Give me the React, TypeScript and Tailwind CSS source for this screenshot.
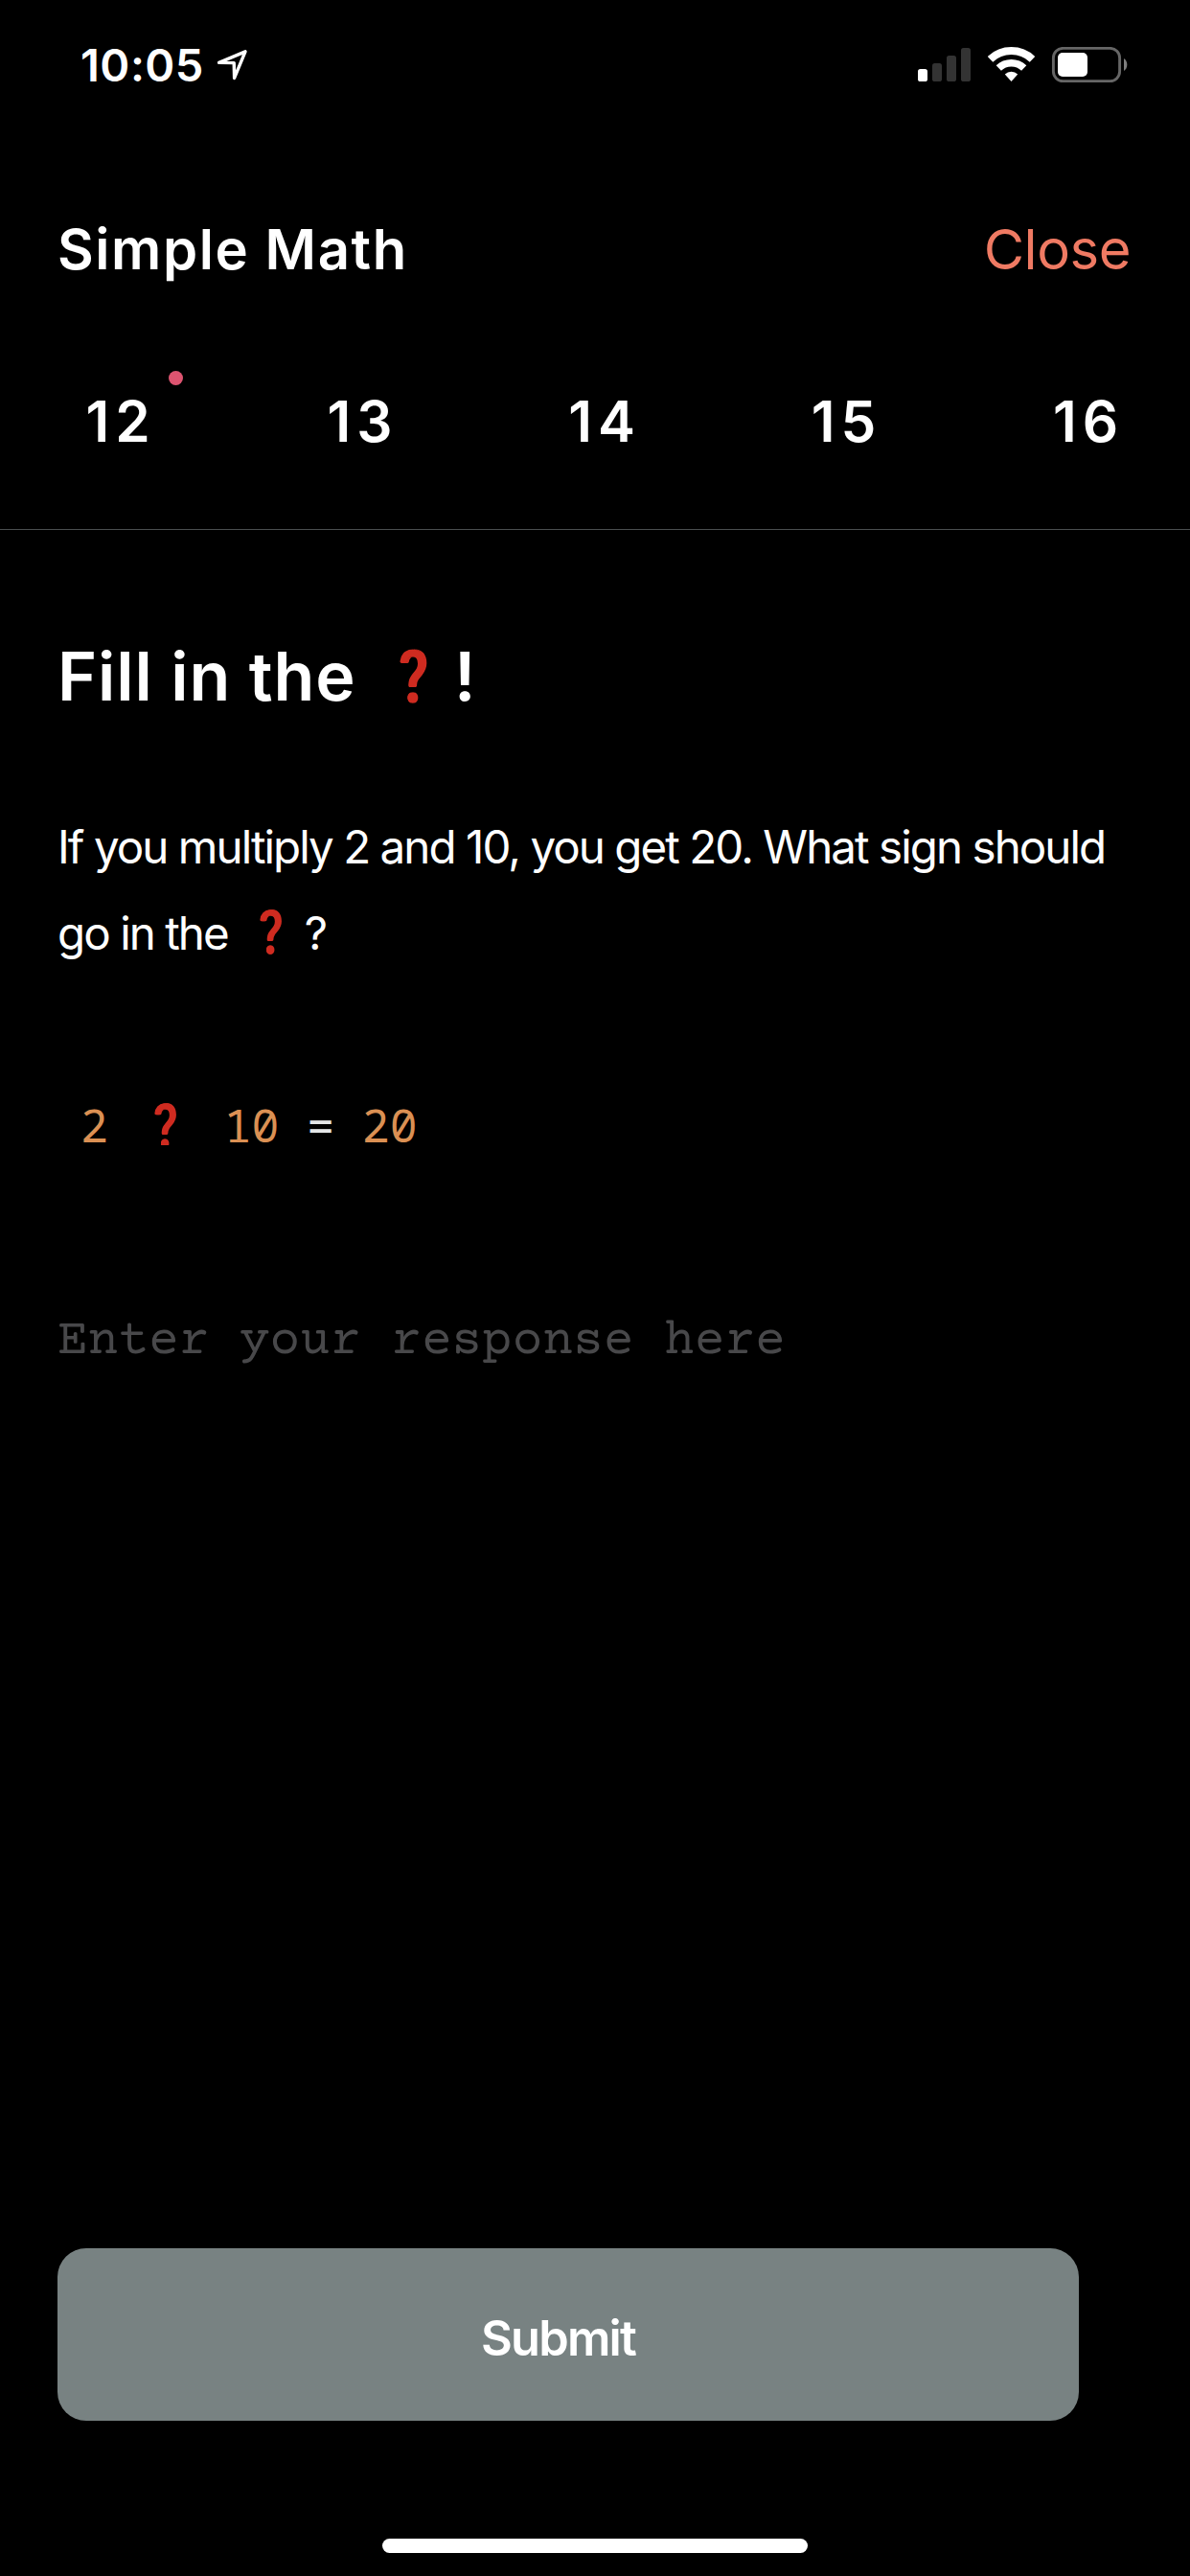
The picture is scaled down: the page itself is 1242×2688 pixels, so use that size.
const tabs = ["12", "13", "14", "15", "16"];

function Mark({ className }: { className: string }) {
  return (
    <span
      className={
        "inline-block text-center font-['Noto_Color_Emoji'] font-normal tracking-normal text-transparent [text-shadow:0.7px_0_0_#cf2b20,-0.7px_0_0_#cf2b20] " +
        className
      }
    >
      <span className="inline-block scale-x-[0.8]">❓</span>
    </span>
  );
}

function Signal() {
  return (
    <svg className="h-[38px] w-[56px]" viewBox="958 49 56 38" fill="none">
      <rect x="958" y="72" width="10" height="13" rx="2.6" fill="#fff" />
      <rect x="973" y="66" width="10" height="19" rx="2.6" fill="#333" />
      <rect x="988" y="58" width="10" height="27" rx="2.6" fill="#333" />
      <rect x="1003" y="50" width="10" height="35" rx="2.6" fill="#333" />
    </svg>
  );
}

function Wifi() {
  return (
    <svg className="h-[38px] w-[50px]" viewBox="1031 49 50 38" fill="none">
      <path d="M1033.5 61.8 A32 32 0 0 1 1077.5 61.8" stroke="#fff" strokeWidth="8" />
      <path d="M1042.3 71.1 A19.1 19.1 0 0 1 1068.7 71.1" stroke="#fff" strokeWidth="7.6" />
      <path d="M1055.5 85 L1048.8 77.5 A9.8 9.8 0 0 1 1062.2 77.5 Z" fill="#fff" />
    </svg>
  );
}

function Battery() {
  return (
    <svg className="h-[38px] w-[80px]" viewBox="1097 49 80 38" fill="none">
      <rect x="1099.4" y="50.4" width="69.2" height="34.2" rx="10" stroke="#666" strokeWidth="2.9" />
      <rect x="1104" y="55" width="31" height="25" rx="5" fill="#fff" />
      <path d="M1173 61 A8 8 0 0 1 1173 74 Z" fill="#7f7f7f" />
    </svg>
  );
}

export default function App() {
  return (
    <div className="flex h-[2688px] w-[1242px] flex-col overflow-hidden bg-black font-['Inter','Liberation_Sans',sans-serif] text-white">
      <div className="flex h-[136px] items-center justify-between pr-[65px] pl-[84px]">
        <div className="flex items-center">
          <span className="text-[47px] leading-[136px] font-semibold tracking-[0.5px]">10:05</span>
          <svg className="ml-[11px] h-[34px] w-[36px]" viewBox="223 51 36 34" fill="none">
            <path d="M227.6 65.4 L255 53.8 L243.6 81.4 L243.2 65.6 Z" stroke="#fff" strokeWidth="3.4" strokeLinejoin="round" />
          </svg>
        </div>
        <div className="flex items-center">
          <Signal />
          <span className="w-[17px]" />
          <Wifi />
          <span className="w-[16px]" />
          <Battery />
        </div>
      </div>

      <header className="flex h-[248px] items-center justify-between pr-[62px] pl-[60px]">
        <h1 className="text-[58px] leading-none font-semibold tracking-[1.6px]">Simple Math</h1>
        <button className="text-[58px] leading-none tracking-[-0.45px] text-[#ef7a63]">Close</button>
      </header>

      <nav className="flex h-[169px] items-start justify-between border-b border-[#4a4e4f] pr-[46px] pl-[66px]">
        {tabs.map((t, i) => (
          <div key={t} className="relative w-[120px] text-center text-[58.5px] leading-[112px] font-semibold tracking-[6px]">
            {t}
            {i === 0 && <span className="absolute top-[3px] left-[110px] h-[15px] w-[15px] rounded-full bg-[#dd5470]" />}
          </div>
        ))}
      </nav>

      <main className="flex flex-col pl-[60px]">
        <h2 className="mt-[93px] flex h-[120px] items-center text-[70px] leading-[120px] font-semibold tracking-[0.9px]">
          <span className="w-[312px] whitespace-nowrap">Fill in the</span>
          <Mark className="w-[102px] pl-[17px] text-[51px]" />!
        </h2>
        <div className="mt-[73px] text-[47.5px] leading-[90px] tracking-[-1.94px]">
          <p className="h-[90px] whitespace-nowrap">If you multiply 2 and 10, you get 20. What sign should</p>
          <p className="flex h-[90px] items-center">
            go in the
            <Mark className="mb-[2px] w-[80px] pl-[12px] text-[42.5px]" />?
          </p>
        </div>
        <div className="mt-[95px] flex h-[120px] items-center pl-[24px] font-['Noto_Sans_Mono','DejaVu_Sans_Mono',monospace] text-[48px] leading-[120px] whitespace-pre text-[#db9053]">
          2
          <Mark className="mt-[2px] w-[121px] text-[42.5px] [clip-path:inset(0_0_40px_0)]" />
          <span>10 <span className="text-[#e5e7e8]">=</span> 20</span>
        </div>
        <div className="mt-[117px] h-[100px] font-['Courier_Prime','Courier_New','Liberation_Mono',monospace] text-[52.8px] leading-[100px] text-[#48484a]">
          Enter your response here
        </div>
      </main>

      <div className="mt-auto flex flex-col">
        <button className="ml-[60px] h-[180px] w-[1066px] rounded-[30px] bg-[#788282] pt-[8px] pr-[21px] text-[50.5px] font-semibold tracking-[-1.8px]">
          Submit
        </button>
        <div className="mt-[123px] mb-[24px] ml-[399px] h-[15px] w-[444px] rounded-full bg-white" />
      </div>
    </div>
  );
}
